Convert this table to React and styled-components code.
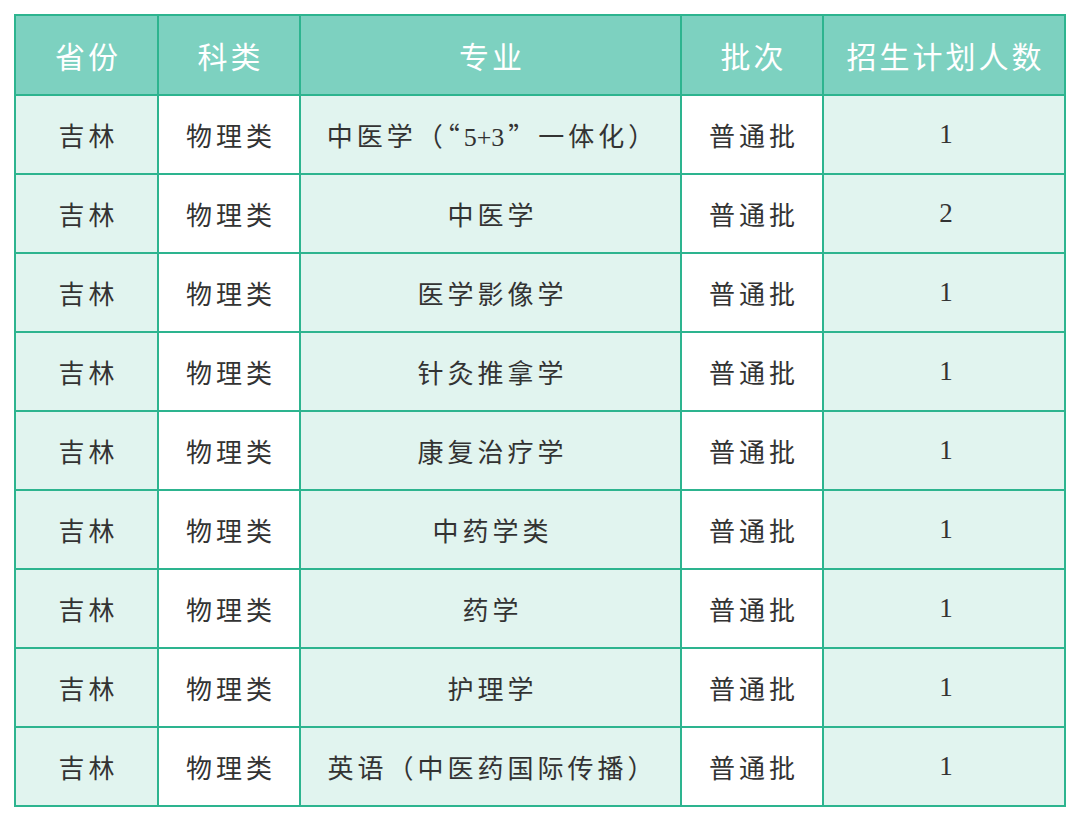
import React from 'react';
import styled, { createGlobalStyle } from 'styled-components';

const GlobalStyle = createGlobalStyle`
  html, body {
    margin: 0;
    padding: 0;
    background: #fff;
  }
  body {
    font-family: "Liberation Serif", "Noto Sans CJK SC", serif;
  }
`;

const Page = styled.div`
  padding: 14px 16px 0 14px;
`;

const Table = styled.table`
  width: 1050px;
  border-collapse: collapse;
  table-layout: fixed;
  border: 2px solid #2db48f;
`;

const Col = styled.col`
  width: ${p => p.w}px;
`;

const HeadCell = styled.th`
  height: 78px;
  padding: 0 0 0 3px;
  background: #7dd1c0;
  color: #fff;
  font-size: 30px;
  font-weight: 400;
  letter-spacing: 3px;
  text-align: center;
  border: 2px solid #2db48f;
`;

const Cell = styled.td`
  height: 77px;
  padding: 0 0 0 4px;
  background: ${p => (p.shade ? '#e1f4ef' : '#fff')};
  color: #333;
  font-size: 26px;
  letter-spacing: 4px;
  text-align: center;
  border: 2px solid #2db48f;
`;

const Num = styled.span`
  font-size: 27px;
  letter-spacing: 0;
`;

const Quote = styled.span`
  font-family: "Noto Sans CJK SC", sans-serif;
`;

const Digits = styled.span`
  letter-spacing: 0;
  margin-right: 4px;
`;

const columns = [143, 142, 381, 142, 242];
const headers = ['省份', '科类', '专业', '批次', '招生计划人数'];

const rows = [
  [
    <>
      中医学（<Quote>“</Quote>
      <Digits>5+3</Digits>
      <Quote>”</Quote>一体化）
    </>,
    1,
  ],
  ['中医学', 2],
  ['医学影像学', 1],
  ['针灸推拿学', 1],
  ['康复治疗学', 1],
  ['中药学类', 1],
  ['药学', 1],
  ['护理学', 1],
  ['英语（中医药国际传播）', 1],
];

export default function App() {
  return (
    <>
      <GlobalStyle />
      <Page>
        <Table>
          <colgroup>
            {columns.map((w, i) => (
              <Col key={i} w={w} />
            ))}
          </colgroup>
          <thead>
            <tr>
              {headers.map(h => (
                <HeadCell key={h}>{h}</HeadCell>
              ))}
            </tr>
          </thead>
          <tbody>
            {rows.map(([major, count], i) => (
              <tr key={i}>
                <Cell shade>吉林</Cell>
                <Cell>物理类</Cell>
                <Cell shade>{major}</Cell>
                <Cell>普通批</Cell>
                <Cell shade>
                  <Num>{count}</Num>
                </Cell>
              </tr>
            ))}
          </tbody>
        </Table>
      </Page>
    </>
  );
}
